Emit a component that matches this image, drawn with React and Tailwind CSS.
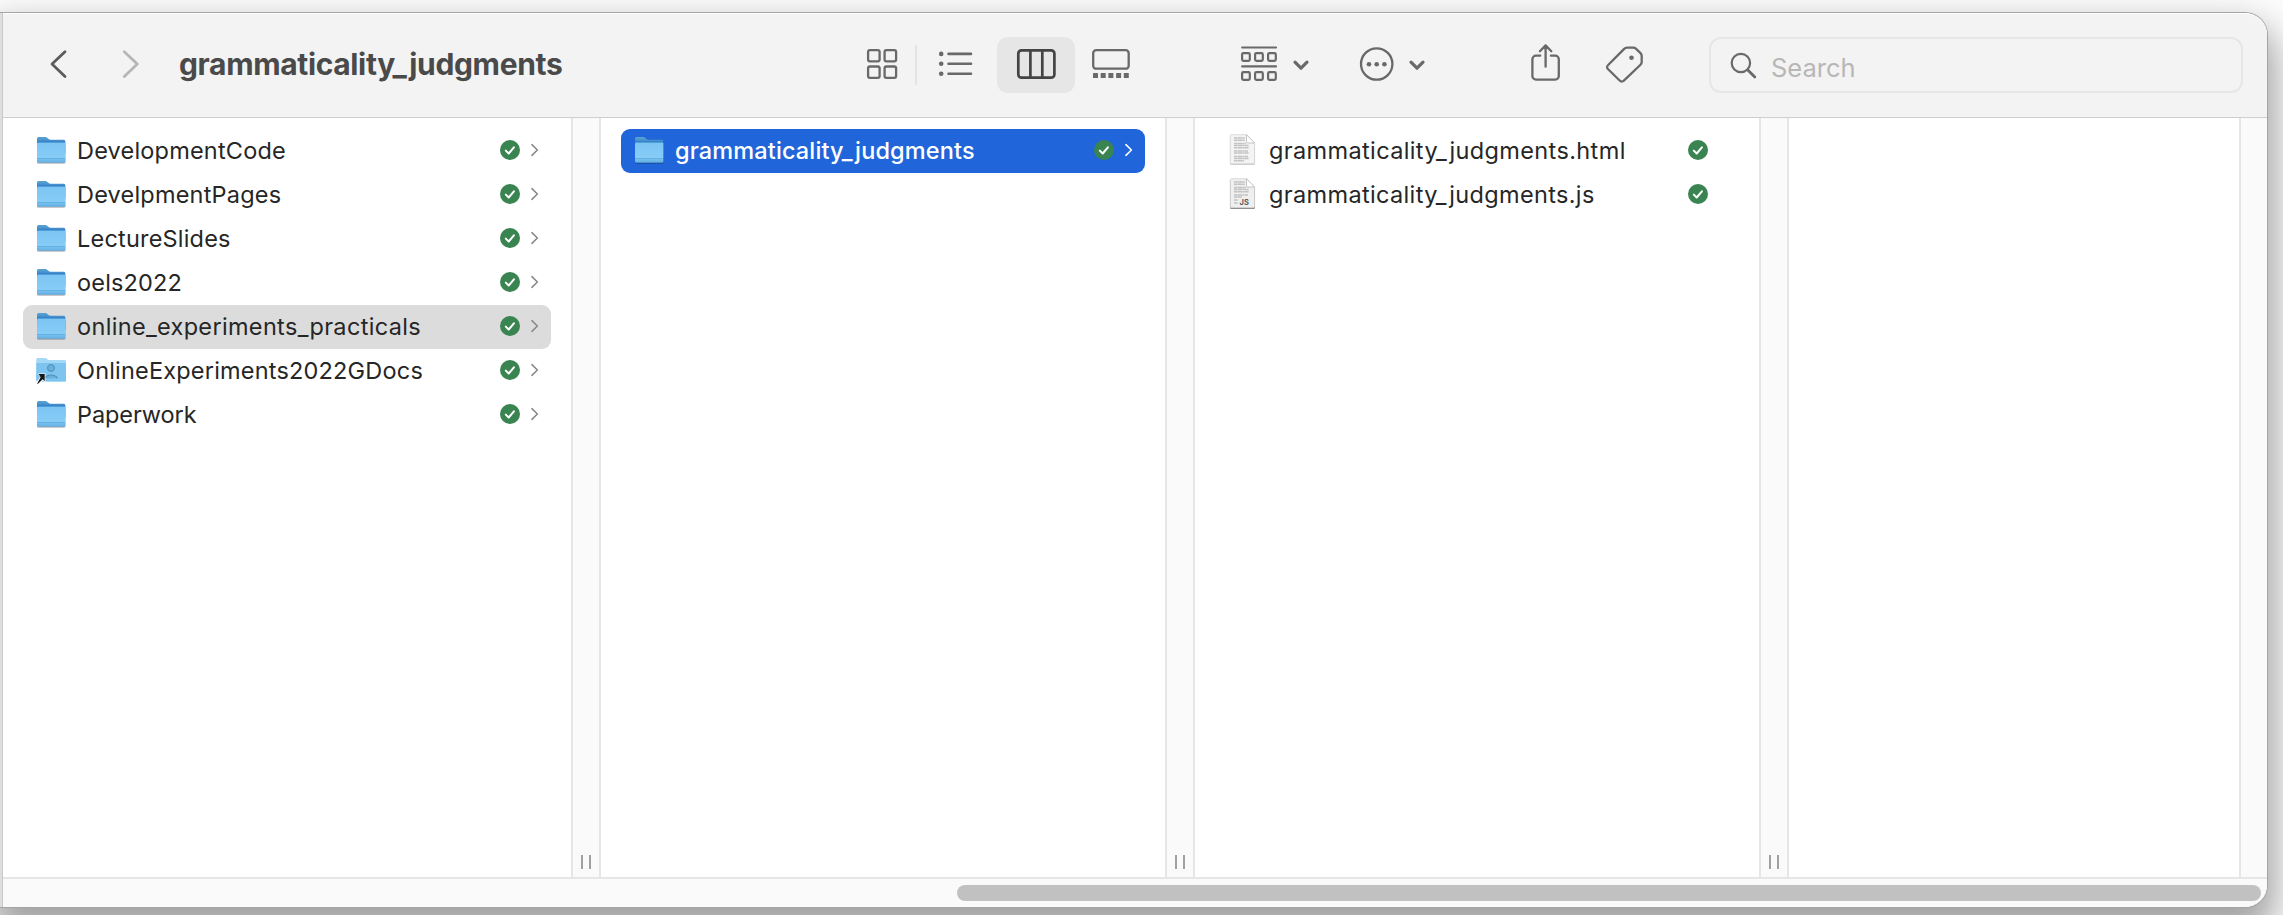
const GRAY = "#696969";

function Icon({ x, w, className = "", children, stroke = GRAY, sw = 2.3 }) {
  return (
    <svg
      className={`block h-14 shrink-0 ${className}`}
      width={w}
      height="56"
      viewBox={`${x} 37 ${w} 56`}
      fill="none"
      stroke={stroke}
      strokeWidth={sw}
      strokeLinecap="round"
      strokeLinejoin="round"
    >
      {children}
    </svg>
  );
}

function Toolbar() {
  return (
    <div className="flex h-[104px] shrink-0 items-start border-b border-[#cfcfcf] bg-[#f3f3f3] pt-[23px]">
      <Icon x={48} w={20} className="ml-[45px]" stroke="#5c5c5c" sw={2.8}>
        <path d="M65 51.7 52 64l13 12.6" />
      </Icon>
      <Icon x={121} w={20} className="ml-[53px]" stroke="#b6b6b6" sw={2.8}>
        <path d="M124.300 51.700 137.300 64l-13 12.600" />
      </Icon>
      <h1 className="ml-[38px] flex h-14 w-[687px] items-center whitespace-nowrap pb-0.5 text-[30px] font-bold tracking-[-0.35px] text-[#4a4a4a]">
        grammaticality_judgments
      </h1>
      <Icon x={866} w={32}>
        <rect x="868.1" y="50.1" width="11.500" height="11.300" rx="1.800" />
        <rect x="884.600" y="50.100" width="11.500" height="11.300" rx="1.800" />
        <rect x="868.100" y="66.500" width="11.500" height="11.300" rx="1.800" />
        <rect x="884.600" y="66.500" width="11.500" height="11.300" rx="1.800" />
      </Icon>
      <div className="ml-[17px] mt-2 h-10 w-0.5 bg-[#e4e4e4]" />
      <Icon x={937} w={36} className="ml-5" sw={2.6}>
        <path d="M948.500 53.900h22.500M948.500 63.800h22.500M948.500 73.800h22.500" />
        <g fill={GRAY} stroke="none">
          <circle cx="941.200" cy="53.900" r="2.300" />
          <circle cx="941.200" cy="63.800" r="2.300" />
          <circle cx="941.200" cy="73.800" r="2.300" />
        </g>
      </Icon>
      <div className="ml-6 flex h-14 w-[78px] justify-center rounded-[11px] bg-[#e6e6e6]">
        <Icon x={1016} w={41} stroke="#444444" sw={2.7}>
          <rect x="1018.300" y="50.300" width="36.100" height="27.400" rx="3.200" />
          <path d="M1030.400 50.300v27.400M1042.300 50.300v27.400" />
        </Icon>
      </div>
      <Icon x={1091} w={40} className="ml-4">
        <rect x="1093.200" y="50.200" width="35.500" height="18.500" rx="3" />
        <g fill={GRAY} stroke="none">
          <rect x="1093" y="73" width="5" height="5" rx=".5" />
          <rect x="1100.700" y="73" width="5" height="5" rx=".5" />
          <rect x="1108.400" y="73" width="5" height="5" rx=".5" />
          <rect x="1116.100" y="73" width="5" height="5" rx=".5" />
          <rect x="1123.800" y="73" width="5" height="5" rx=".5" />
        </g>
      </Icon>
      <Icon x={1240} w={38} className="ml-[109px]" sw={2.2}>
        <path d="M1242.200 47.500h33.800M1242.200 66.400h33.800" />
        <rect x="1242.100" y="53.100" width="7.700" height="7.800" rx="1.300" />
        <rect x="1255.100" y="53.100" width="7.700" height="7.800" rx="1.300" />
        <rect x="1268.100" y="53.100" width="7.700" height="7.800" rx="1.300" />
        <rect x="1242.100" y="72.100" width="7.700" height="7.800" rx="1.300" />
        <rect x="1255.100" y="72.100" width="7.700" height="7.800" rx="1.300" />
        <rect x="1268.100" y="72.100" width="7.700" height="7.800" rx="1.300" />
      </Icon>
      <Icon x={1292} w={18} className="ml-3.5" sw={3.2}>
        <path d="m1295 62.200 6 6 6-6" />
      </Icon>
      <Icon x={1359} w={36} className="ml-[49px]">
        <circle cx="1376.700" cy="64" r="15.700" />
        <g fill={GRAY} stroke="none">
          <circle cx="1369" cy="64.200" r="2.300" />
          <circle cx="1376.700" cy="64.200" r="2.300" />
          <circle cx="1384.400" cy="64.200" r="2.300" />
        </g>
      </Icon>
      <Icon x={1408} w={18} className="ml-[13px]" sw={3.2}>
        <path d="m1411 62.200 6 6 6-6" />
      </Icon>
      <Icon x={1530} w={32} className="ml-[104px]">
        <path d="M1540.300 55.700h-4.300a3.600 3.600 0 0 0-3.600 3.600v16.700a3.600 3.600 0 0 0 3.600 3.600h19.200a3.600 3.600 0 0 0 3.600-3.600v-16.700a3.600 3.600 0 0 0-3.600-3.600h-4.300M1545.600 66.700v-21M1539.900 51.200l5.700-5.800 5.700 5.800" />
      </Icon>
      <Icon x={1605} w={39} className="ml-[43px]">
        <path d="M1607.900 65.300 1624.200 48.900a4 4 0 0 1 2.900-1.200h6.200a4 4 0 0 1 2.600 1l4.600 4.400a4 4 0 0 1 1.200 2.900v6a4 4 0 0 1-1.200 2.800l-16.900 16a2.600 2.600 0 0 1-3.700 0l-12-11.800a2.600 2.600 0 0 1 0-3.700Z" />
        <circle cx="1631.500" cy="57.700" r="2.300" fill={GRAY} stroke="none" />
      </Icon>
      <div className="ml-[65px] flex h-14 w-[534px] items-center rounded-[12px] border-2 border-[#e6e6e6]">
        <Icon x={1729} w={29} className="ml-[18px]" sw={2.2}>
          <circle cx="1740.900" cy="63" r="9.200" />
          <path d="m1747.800 70 7 7" strokeWidth="2.800" />
        </Icon>
        <span className="ml-[13px] mt-1.5 text-[25.5px] text-[#b7b7b7]">Search</span>
      </div>
    </div>
  );
}

function Folder() {
  return (
    <svg className="block shrink-0" width="32" height="32" viewBox="0 0 32 32">
      <defs>
        <linearGradient id="tab" x1="0" y1="3" x2="0" y2="20" gradientUnits="userSpaceOnUse">
          <stop offset="0" stopColor="#5ba3d3" />
          <stop offset=".2" stopColor="#4792cd" />
          <stop offset=".32" stopColor="#2878c6" />
          <stop offset="1" stopColor="#2878c6" />
        </linearGradient>
        <linearGradient id="front" x1="0" y1="0" x2="0" y2="1">
          <stop offset="0" stopColor="#7cc5f3" />
          <stop offset=".76" stopColor="#86ccf7" />
          <stop offset=".78" stopColor="#62b0e2" />
          <stop offset=".84" stopColor="#74bfee" />
          <stop offset="1" stopColor="#5fabdd" />
        </linearGradient>
      </defs>
      <rect x="2" y="9" width="28.400" height="20.800" rx="1.500" fill="#000" opacity=".28" />
      <path d="M2 4.500A1.500 1.500 0 0 1 3.500 3h7.200c1.800 0 2.600 2.800 4.600 2.800h13.500a1.500 1.500 0 0 1 1.500 1.500V20H2Z" fill="url(#tab)" />
      <path d="M2 9.800A1.200 1.200 0 0 1 3.200 8.600h26a1.200 1.200 0 0 1 1.200 1.200v17.400a1.600 1.600 0 0 1-1.600 1.600H3.600A1.600 1.600 0 0 1 2 27.200Z" fill="url(#front)" />
    </svg>
  );
}

function SharedFolder() {
  return (
    <svg className="block shrink-0" width="32" height="32" viewBox="0 0 32 32">
      <path d="M1.300 5.200A1.300 1.300 0 0 1 2.600 3.900h7.500c1.600 0 2.200 2.200 4 2.200h15.600A1.300 1.300 0 0 1 31 7.400v18.800a1.300 1.300 0 0 1-1.300 1.300H2.600a1.300 1.300 0 0 1-1.300-1.300Z" fill="#a3d8f6" />
      <path d="M1.300 9h29.700v17.200a1.300 1.300 0 0 1-1.300 1.300H2.600a1.300 1.300 0 0 1-1.300-1.300Z" fill="#7dc5f0" />
      <circle cx="16" cy="14" r="3.500" fill="#69afd8" stroke="#4c90ba" strokeWidth="1" />
      <path d="M9.600 24.200c1.300-2.300 3.600-3.200 6.400-3.200s5.200.9 6.400 3.200" fill="#69afd8" stroke="#4c90ba" strokeWidth="1.200" />
      <path d="M3 19.500h7.400v9.300l-2.500-2.400-5.600 5-1.200-2.600 4.100-5.700Z" fill="#fff" />
      <path d="M3.700 20h6v7.200l-2-2-4.400 4.300-1.300.4 3.600-6.600Z" fill="#171717" />
    </svg>
  );
}

function Document({ js }) {
  return (
    <svg className="block shrink-0" width="32" height="34" viewBox="0 0 32 34">
      <path d="M4.500 2.500h15L28 11v19.500a1.500 1.500 0 0 1-1.500 1.500h-22A1.500 1.500 0 0 1 3 30.500V4a1.500 1.500 0 0 1 1.500-1.500Z" fill={js ? "#808080" : "#cfcfcf"} />
      <path d="M4.500 1.700h15L27.600 10v19.500a1.300 1.300 0 0 1-1.300 1.300H4.500a1.300 1.300 0 0 1-1.300-1.300V3a1.300 1.300 0 0 1 1.300-1.300Z" fill={js ? "#efefef" : "#f4f4f4"} stroke="#d0d0d0" strokeWidth=".7" />
      <g stroke="#c2c2c2" strokeWidth="1.500" strokeDasharray="3 .4 5 .3 2 .3">
        <path d="M7 5h11M7 7.200h11M7 10.500h12M7 12.600h15M7 14.700h15M7 17.900h14" />
        {js ? <path d="M7 20h8M7 23h4M7 26h4" /> : <path d="M7 20h15M7 23.500h14M7 25.600h15M7 27.700h10" />}
      </g>
      <path d="M19.500 1.700V8.500a1.500 1.500 0 0 0 1.500 1.500h6.600Z" fill="#fff" stroke="#bdbdbd" strokeWidth=".9" />
      {js && (
        <text x="12.500" y="27.600" fontSize="7.500" fontWeight="700" fill="#5a5a5a" fontFamily="Inter, sans-serif">
          JS
        </text>
      )}
    </svg>
  );
}

function Row({ icon, label, tracking = "", selected = "", chevron = "#8a8a8a", leaf }) {
  return (
    <li className={`flex h-11 items-center rounded-[9px] pb-0.5 pl-3 ${selected}`}>
      {icon}
      <span className={`ml-2.5 mt-0.5 flex-1 whitespace-nowrap ${tracking}`}>{label}</span>
      <svg className="block shrink-0" width="20" height="20" viewBox="0 0 20 20">
        <circle cx="10" cy="10" r="10" fill="#3a8451" />
        <path d="m5.800 10.600 2.900 2.900 5.200-6.200" fill="none" stroke="#fff" strokeWidth="2" strokeLinecap="round" strokeLinejoin="round" />
      </svg>
      {leaf ? (
        <span className="w-[31px]" />
      ) : (
        <svg className="ml-2.5 mr-[11px] block shrink-0" width="10" height="16" viewBox="0 0 10 16">
          <path d="m1.900 2.700 5.500 5.300-5.500 5.300" fill="none" stroke={chevron} strokeWidth="1.600" strokeLinecap="round" strokeLinejoin="round" />
        </svg>
      )}
    </li>
  );
}

function Divider() {
  return (
    <div className="flex w-[30px] shrink-0 items-end justify-center gap-1.5 border-x-2 border-x-[#e6e6e6] bg-[#fafafa] pb-2">
      <span className="h-3.5 w-0.5 bg-[#a0a0a0]" />
      <span className="h-3.5 w-0.5 bg-[#a0a0a0]" />
    </div>
  );
}

const folders = [
  { name: "DevelopmentCode", tracking: "tracking-[0.19px]" },
  { name: "DevelpmentPages", tracking: "tracking-[0.2px]" },
  { name: "LectureSlides", tracking: "tracking-[0.2px]" },
  { name: "oels2022", tracking: "tracking-[0.17px]" },
  { name: "online_experiments_practicals", tracking: "tracking-[0.33px]", selected: true },
  { name: "OnlineExperiments2022GDocs", tracking: "tracking-[0.19px]", shared: true },
  { name: "Paperwork", tracking: "tracking-[-0.1px]" },
];

export default function App() {
  return (
    <div className="h-[915px] w-[2283px] overflow-hidden bg-[#fcfcfc] pt-[13px] font-['Inter',sans-serif]">
      <div className="flex h-[894px] w-[2267px] rounded-r-[22px] shadow-[0_0_0_1px_#a4a4a4,0_20px_36px_8px_rgba(0,0,0,0.36)]">
        <div className="w-[3px] shrink-0 border-r border-[#c9c9c9] bg-[#dedede]" />
        <div className="flex min-w-0 flex-1 flex-col overflow-hidden rounded-r-[22px] border-t border-white bg-white">
          <Toolbar />
          <div className="flex min-h-0 flex-1 text-[23.5px] text-[#262626]">
            <ul className="w-[568px] shrink-0 pl-5 pr-5 pt-[11px]">
              {folders.map(({ name, tracking, selected, shared }) => (
                <Row
                  key={name}
                  label={name}
                  tracking={tracking}
                  icon={shared ? <SharedFolder /> : <Folder />}
                  selected={selected ? "bg-[#dcdcdc]" : ""}
                />
              ))}
            </ul>
            <Divider />
            <ul className="w-[564px] shrink-0 px-5 pt-[11px]">
              <Row
                label="grammaticality_judgments"
                tracking="tracking-[0.13px]"
                icon={<Folder />}
                selected="bg-[#2165da] text-white font-medium"
                chevron="#ffffff"
              />
            </ul>
            <Divider />
            <ul className="w-[564px] shrink-0 px-5 pt-[11px]">
              <Row label="grammaticality_judgments.html" tracking="tracking-[0.37px]" icon={<Document />} leaf />
              <Row label="grammaticality_judgments.js" tracking="tracking-[0.35px]" icon={<Document js />} leaf />
            </ul>
            <Divider />
            <div className="w-[450px] shrink-0" />
            <div className="flex-1 border-l-2 border-[#e6e6e6] bg-[#fafafa]" />
          </div>
          <div className="flex h-[30px] shrink-0 justify-end border-t-2 border-[#e6e6e6] bg-[#fafafa] pr-1.5 pt-1.5">
            <div className="h-4 w-[1304px] rounded-full bg-[#c1c1c1]" />
          </div>
        </div>
      </div>
    </div>
  );
}
